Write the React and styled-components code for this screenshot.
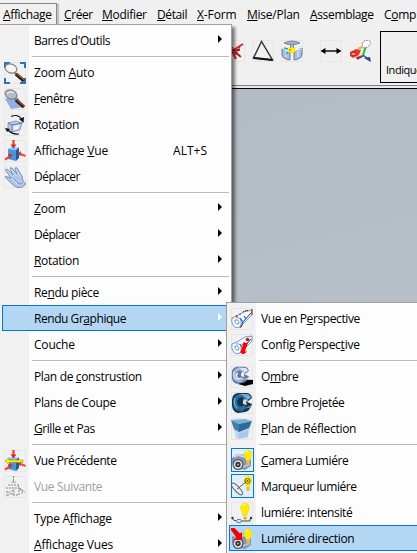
import React from "react";
import styled, { createGlobalStyle, css } from "styled-components";

const Global = createGlobalStyle`
  * { box-sizing: border-box; }
  body { margin: 0; overflow: hidden; background: #f0f0f0; }
`;

const Window = styled.div`
  position: relative;
  width: 417px;
  height: 553px;
  overflow: hidden;
  display: flex;
  flex-direction: column;
  background: #f0f0f0;
  color: #000;
  font: 12px/16px "Open Sans", "Noto Sans", sans-serif;
`;

const MenuBar = styled.nav`
  display: flex;
  flex: none;
  height: 25px;
  padding-top: 3px;
`;

const BarItem = styled.div`
  flex: none;
  width: ${(p) => p.$w}px;
  height: 22px;
  padding: 4px 0 0 5px;
  white-space: nowrap;
  letter-spacing: ${(p) => p.$ls || 0}px;
  ${(p) =>
    p.$open &&
    css`
      margin-right: 2px;
      padding: 3px 0 0 3px;
      border: 1px solid #858585;
      border-left: 0;
      border-bottom: 0;
      box-shadow: 2px 1px 1px #c4c4c4;
    `}
`;

const Key = styled.span`
  text-decoration: underline;
  text-decoration-thickness: 1px;
  text-underline-offset: 1px;
  text-decoration-skip-ink: none;
`;

const ToolBar = styled.div`
  display: flex;
  flex: none;
  height: 60px;
  padding: 6px 0 0 223px;
`;

const Tools = styled.div`
  display: flex;
  flex: none;
  width: 157px;
  padding-top: 9px;
  gap: 7px;
`;

const Tool = styled.div`
  display: flex;
  margin-left: ${(p) => (p.$group ? 10 : 0)}px;
`;

const Prompt = styled.div`
  flex: none;
  width: 60px;
  height: 52px;
  padding: 30px 0 0 5px;
  border: 1px solid #000;
  font-size: 11px;
  letter-spacing: -0.45px;
`;

const Viewport = styled.main`
  flex: 1;
  border-top: 1px solid #808080;
  background: linear-gradient(165deg, #b2bac4 0%, #bac2cc 100%);
  &::before {
    content: "";
    display: block;
    height: 2px;
    border-bottom: 1px solid #000;
    background: #e8e8e8;
  }
`;

const Menu = styled.div`
  position: absolute;
  left: ${(p) => p.$x}px;
  top: ${(p) => p.$y}px;
  width: ${(p) => p.$w}px;
  height: ${(p) => 560 - p.$y}px;
  padding: 2px 2px 0;
  border: 1px solid #a0a0a0;
  border-left-width: ${(p) => (p.$sub ? 1 : 0)}px;
  background: linear-gradient(90deg, #f1f1f1 29px, #fdfdfd 29px);
  box-shadow: 3px 3px 3px rgba(0, 0, 0, 0.5);
`;

const Row = styled.div`
  display: flex;
  align-items: center;
  height: 26px;
  padding-left: 2px;
  white-space: nowrap;
  color: ${(p) => (p.$disabled ? "#a0a0a0" : "#000")};
  ${(p) =>
    p.$active &&
    css`
      background: #b3d7f3;
      box-shadow: inset 0 0 0 1px #0078d7;
    `}
`;

const IconSlot = styled.span`
  display: flex;
  align-items: center;
  flex: none;
  width: 23px;
  height: 24px;
  margin-right: 7px;
  padding-top: 2px;
  ${(p) =>
    p.$checked &&
    css`
      padding-top: 0;
      background: #e2eef9;
      box-shadow: inset 0 0 0 1px #0078d7;
    `}
`;

const Label = styled.span`
  flex: 1;
  padding-top: 2px;
  letter-spacing: ${(p) => p.$ls || 0}px;
`;

const Shortcut = styled.span`
  margin-right: 22px;
  padding-top: 2px;
`;

const Arrow = styled.span`
  width: 0;
  height: 0;
  margin: 0 7px 2px 0;
  border: 4px solid transparent;
  border-left-color: ${(p) => (p.$light ? "#fff" : "#000")};
  border-right: 0;
`;

const Separator = styled.div`
  height: 6px;
  padding: 3px 0 0 30px;
  &::before {
    content: "";
    display: block;
    height: 1px;
    background: #bababa;
  }
`;

const Svg = ({ children, framed = true }) => (
  <svg width="22" height="22" viewBox="0 0 22 22" fill="none">
    {framed && <rect x=".5" y=".5" width="21" height="21" stroke="#e6e6e6" />}
    {children}
  </svg>
);

const Lens = ({ fill }) => (
  <>
    <path d="M10 10l3 3" stroke="#777" strokeWidth="2" />
    <path d="M12 12l8 7" stroke="#2e1c12" strokeWidth="3.600" />
    <path d="M12.500 11.500l8 6.500" stroke="#a45d34" strokeWidth="1.400" />
    <ellipse cx="7" cy="6.500" rx="6" ry="4.400" transform="rotate(20 7 6.500)" fill={fill} stroke="#858585" strokeWidth="1.200" />
    <path d="M3 5.500q3-3 7-1" stroke="#fff" />
  </>
);

const Cube = () => (
  <>
    <path d="M4 9l3-2 8 .5-3 2.500z" fill="#8cc8f6" />
    <path d="M4 9l8 1v11l-8-2z" fill="#4796da" />
    <path d="M12 10l3-2.500V18l-3 3z" fill="#1d5c9e" />
  </>
);

const RedArrows = () => (
  <>
    <path d="M9.500 0v5M1 19.500l5-3M21.500 16l-5-2" stroke="#ef4a42" strokeWidth="2.400" />
    <path d="M6.500 4.500h6l-3 4zM4 14l4.500.5-2.500 4zM17 11l-3 2.500 2.500 3z" fill="#d42a25" />
  </>
);

const Bulb = () => (
  <>
    <path d="M13 5.500a4 4.500 0 1 1 8 0c0 2-2 3-2 6h-4c0-3-2-4-2-6z" fill="#ffed00" stroke="#e5cf42" strokeWidth=".5" />
    <path d="M15 3q1-1 2-1" stroke="#fffbb0" />
    <path d="M15.500 12h3v3l-1.500 1-1.500-1z" fill="#e0ad28" />
    <path d="M15.500 13h3" stroke="#fff0a0" strokeWidth=".8" />
  </>
);

const Camera = () => (
  <>
    <path d="M1 9l5-4 9 1 5 4v7l-6 4-9-2-4-5z" fill="#8593b0" />
    <path d="M3 8l4-2 7 2" stroke="#cbd4e8" strokeWidth="2" />
    <path d="M12 18l7-3" stroke="#b9c4dc" strokeWidth="2" />
    <circle cx="7" cy="15.500" r="5.500" fill="#555b68" />
    <circle cx="7" cy="15.500" r="4.200" fill="#e4e7ed" />
    <circle cx="7" cy="15.500" r="2.700" fill="#333" />
    <circle cx="7" cy="15.500" r="1" fill="#bbb" />
  </>
);

const Pipe = ({ dots }) => (
  <>
    <path d="M1 10l5-2 8-5 7-1v6L9 19q-5 2-7-2-2-3-1-7z" fill="#f6faff" />
    <path
      d="M1 10l5-2 8-5 7-1v5L9 19q-5 2-7-2-2-3-1-7zM5 10q4-1 5 3 1 3-1 6M4 12q3-1 4 2 0 3-2 2-3-1-2-4z"
      stroke="#5b92ca"
      strokeWidth=".9"
    />
    <path d="M9 10l3 4 8-9M12 14l-2 5M13 8l2 3" stroke="#245799" strokeWidth="1.100" />
    {dots && <path d="M1 10l5-2 8-5 7-1v5" stroke="#303030" strokeWidth="1.300" strokeDasharray="1.200 3" />}
    {dots && <path d="M5 8h1.500M14 3h1.500M20 4h1.500M9 19h1" stroke="#e11" strokeWidth="1.500" />}
    {dots && <path d="M1 10h1.500M17 3h1" stroke="#d8d400" strokeWidth="1.500" />}
  </>
);

const Ring = ({ light, mid, dark, gap }) => (
  <>
    <path d="M1 8q0-6 6-7h8q5 0 6 5l-5 4 5 2q-2 7-7 8l-7 1q-5-1-6-7z" fill={dark} />
    <path d="M8 2q-6 2-6 9t6 8q5 1 8-4l-3-2q-3 3-6 0-2-5 1-7 3-2 5 1l4-1q-3-5-9-4z" fill={mid} />
    <path d="M8 2h7q4 0 5 4l-4 2q-3-5-8-6z" fill={light} />
    <path d="M13 7l4 1-2 2 1 3-4-1q-1-3 1-5z" fill={gap} />
    <path d="M4 6q-2 6 2 10M16 16l4-2" stroke={light} strokeWidth="1.200" />
  </>
);

const icons = {
  zoomAuto: (
    <Svg>
      <path d="M1 6V1h5M16 1h5v5M1 16v5h5M16 21h5v-5" stroke="#2e74bb" strokeWidth="2" />
      <Lens fill="#f5f5f3" />
    </Svg>
  ),
  window: (
    <Svg>
      <path d="M1 11l11-4 8 12-13 2z" fill="#8eafe8" />
      <Lens fill="#b5bec6" />
    </Svg>
  ),
  rotate: (
    <Svg>
      <path d="M4 9l8-2 6 2-2 7-8 2-4-3z" fill="#b6cdf3" stroke="#7489b3" strokeWidth=".8" />
      <path d="M4 9l4 2 10-2M8 11v7" stroke="#53698f" strokeWidth=".8" />
      <path d="M9.500 12l6-1-1.500 4-4.500 1z" fill="#eef5ff" />
      <path d="M7 2.500q7-3 11 3M15 20q-7 1-12-5" stroke="#151515" strokeWidth="1.200" />
      <path d="M15 5l5-2-.5 6zM1 14l5 1-3 3z" fill="#151515" />
    </Svg>
  ),
  view: (
    <Svg>
      <Cube />
      <RedArrows />
    </Svg>
  ),
  hand: (
    <Svg>
      <path
        d="M1 11q1-1 3 0l3 1-5-7q-1-2 1-2l6 6-3-6q0-2 2-1l5 6-2-5q0-2 2-1l5 8 1 5 3 3-5 4q-6 0-9-4z"
        fill="#b2c3e7"
        stroke="#7089b9"
        strokeWidth=".9"
      />
      <path d="M3 4l6 7M7 3l5 7M12 3l4 8M8 13l6 6M16 15l4 3" stroke="#d5e1f7" strokeWidth=".8" />
      <path d="M10 13l5 5 4-1" stroke="#8199ca" />
    </Svg>
  ),
  previous: (
    <Svg>
      <Cube />
      <RedArrows />
      <path d="M1 11l4-3.500V10h14v2.500H5V15z" fill="#fff200" stroke="#8b7a13" strokeWidth=".5" />
    </Svg>
  ),
  next: (
    <Svg>
      <path d="M9.500 0v7M4 9h11M2 12h13v7H8v-5M3 15v5l4-3M15 13l6 3M14 10l4 4" stroke="#858585" strokeDasharray="2 1" />
      <path d="M7 6h5M10 13v6M3 16h3M18 13v5" stroke="#a5a5a5" />
    </Svg>
  ),
  perspective: (
    <Svg>
      <Pipe dots />
    </Svg>
  ),
  perspectiveConfig: (
    <Svg>
      <Pipe />
      <path d="M12 9h5l-3 8q0 2 2-1-1 4-4 4-3 0-2-4l2-5h-1z" fill="#f00" />
      <ellipse cx="16.500" cy="5.500" rx="1.800" ry="1.800" fill="#f00" />
    </Svg>
  ),
  shadow: (
    <Svg>
      <path d="M10 16q4-3 12-2v4l-8 2-7-2z" fill="#050505" />
      <g transform="scale(.85)">
        <Ring light="#dbe5fb" mid="#a3b7de" dark="#66769d" gap="#eef2fa" />
      </g>
      <path d="M7 7q-3 2 0 6l3-1" stroke="#f5f8ff" strokeWidth="1.300" />
    </Svg>
  ),
  castShadow: (
    <Svg>
      <Ring light="#78abd1" mid="#286d9f" dark="#12334d" gap="#d5dce3" />
    </Svg>
  ),
  mirror: (
    <Svg>
      <path d="M1 5l6 1 9-1 4 1-3 14-12 1z" fill="#c4daf5" />
      <path d="M0 2l14-1 7 2-13 3z" fill="#72b2da" />
      <path d="M0 2l8 4v8l-5-3z" fill="#477da8" />
      <path d="M8 6l13-3-3 7-10 4z" fill="#2e6b99" />
      <path d="M7 15l10-3v6L8 21z" fill="#a9c6eb" />
    </Svg>
  ),
  camera: (
    <Svg framed={false}>
      <Camera />
      <Bulb />
    </Svg>
  ),
  marker: (
    <Svg framed={false}>
      <Bulb />
      <ellipse cx="6" cy="14" rx="2.500" ry="7.500" transform="rotate(-43 6 14)" fill="#e8eef4" stroke="#5d6267" />
      <path d="M6 14l9-7" stroke="#5d6267" />
      <circle cx="16.500" cy="6" r="2.500" stroke="#665a00" />
      <circle cx="16.500" cy="6" r="1" fill="#665a00" />
    </Svg>
  ),
  intensity: (
    <Svg>
      <g transform="translate(-5 0) scale(1.120)">
        <Bulb />
      </g>
      <path d="M2 17q0 2 4 2h13v-2" stroke="#444" />
      <circle cx="1.500" cy="16" r="1.200" fill="#333" />
      <circle cx="20" cy="16" r="1.200" fill="#333" />
      <ellipse cx="8" cy="19" rx="2.600" ry="1.700" fill="#dce9fc" stroke="#657ca5" />
    </Svg>
  ),
  direction: (
    <Svg framed={false}>
      <Camera />
      <Bulb />
      <path d="M-1 1L2-1.500l7 7L11 4v8H3l2.500-2.500z" fill="#f40000" />
    </Svg>
  ),
  redCross: (
    <Svg>
      <path d="M3 10h14M13 19l-4-8M9 11l11-7M9 10l9 7" stroke="#df2020" strokeWidth="2" />
      <path d="M8 6l9 10M12 15l5-8" stroke="#501010" strokeWidth=".8" />
    </Svg>
  ),
  triangle: (
    <Svg>
      <path d="M9.500 1.500L1.500 18l19 2z" stroke="#333" strokeWidth="1.400" />
      <path d="M1.500 18l19 2" stroke="#111" strokeWidth="2" />
    </Svg>
  ),
  assembly: (
    <Svg>
      <path d="M3 3q8-4 16 0l-5 1.500h-2l1 4H9l1-4H7z" fill="#9eafd3" stroke="#687490" strokeWidth=".8" />
      <path d="M1 9l8 3v8q-8-1-8-6zM21 8l-8 4v8q8-1 8-6z" fill="#a9bde1" stroke="#596783" strokeWidth=".8" />
      <path d="M2 9l7 3 3-1 9-2M5 11v6M17 11v6" stroke="#e9f0ff" />
      <path d="M11 6l1 2 3-1-1 3 2 1-3 1-2 2-2-2H6l2-2-1-2 3 0z" fill="#ffef00" />
      <path d="M3 8l4 1M7 12l-2 2" stroke="#1fac8b" strokeWidth="1.300" />
      <circle cx="9" cy="10" r=".8" fill="#e11" />
    </Svg>
  ),
  span: (
    <Svg>
      <path d="M3 11h16" stroke="#000" strokeWidth="1.400" />
      <path d="M.5 11l5-3v6zM21.500 11l-5-3v6z" fill="#000" />
    </Svg>
  ),
  axes: (
    <Svg framed={false}>
      <path d="M14 16l-6 3M14 15l6 5" stroke="#244b84" strokeWidth="1.500" />
      <path d="M14 15l3-9" stroke="#15c330" strokeWidth="2" />
      <path d="M13 16l-6 2" stroke="#e52222" strokeWidth="1.500" />
      <path d="M15 18l6-1 1 5z" fill="#244b84" />
      <path d="M1 12l6-3 5 1-2 5-6 3-3-2z" fill="#e23a2e" />
      <ellipse cx="4.500" cy="14" rx="2.800" ry="1.800" fill="#ff938a" stroke="#b41510" />
      <path d="M9 9l4-2" stroke="#ffb21d" strokeWidth="2.500" />
      <path d="M13 4l2-3 5-1 2 3-3 4-5 1z" fill="#fff" stroke="#666" strokeWidth=".8" strokeDasharray="2 1" />
    </Svg>
  ),
};

/* Underlines the character that follows "&". */
const Mnemonic = ({ text }) => {
  const i = text.indexOf("&");
  if (i < 0) return text;
  return (
    <>
      {text.slice(0, i)}
      <Key>{text[i + 1]}</Key>
      {text.slice(i + 2)}
    </>
  );
};

const bar = [
  { text: "&Affichage", w: 57, ls: -0.35, open: true },
  { text: "&Créer", w: 38, ls: -0.4 },
  { text: "&Modifier", w: 55, ls: -0.3 },
  { text: "&Détail", w: 40, ls: -0.4 },
  { text: "&X-Form", w: 50, ls: -0.1 },
  { text: "&Mise/Plan", w: 63, ls: -0.25 },
  { text: "&Assemblage", w: 74, ls: -0.35 },
  { text: "C&omp", w: 60, ls: -0.3 },
];

const mainMenu = [
  { text: "Barres d'Outils", sub: true, ls: -0.43 },
  null,
  { text: "Zoom &Auto", icon: "zoomAuto", ls: -0.2 },
  { text: "&Fenêtre", icon: "window", ls: -0.45 },
  { text: "Ro&tation", icon: "rotate", ls: -0.3 },
  { text: "Affichage &Vue", icon: "view", shortcut: "ALT+S", ls: -0.15 },
  { text: "Déplacer", icon: "hand", ls: -0.5 },
  null,
  { text: "&Zoom", sub: true, ls: -0.2 },
  { text: "Déplacer", sub: true, ls: -0.5 },
  { text: "&Rotation", sub: true, ls: -0.3 },
  null,
  { text: "Re&ndu pièce", sub: true, ls: -0.38 },
  { text: "Rendu Gr&aphique", sub: true, active: true, ls: -0.45 },
  { text: "Couche", sub: true, ls: -0.2 },
  null,
  { text: "Plan de &construstion", sub: true, ls: -0.35 },
  { text: "Plans de Coupe", sub: true, ls: -0.33 },
  { text: "&Grille et Pas", sub: true, ls: -0.43 },
  null,
  { text: "Vue Précédente", icon: "previous", ls: -0.4 },
  { text: "Vue Suivante", icon: "next", disabled: true, ls: -0.35 },
  null,
  { text: "Type A&ffichage", sub: true, ls: -0.27 },
  { text: "&Affichage Vues", sub: true, ls: -0.2 },
];

const renderMenu = [
  { text: "Vue en P&erspective", icon: "perspective", ls: -0.4 },
  { text: "Config Perspec&tive", icon: "perspectiveConfig", ls: -0.26 },
  null,
  { text: "O&mbre", icon: "shadow", ls: -0.4 },
  { text: "Ombre Projetée", icon: "castShadow", ls: -0.43 },
  { text: "&Plan de Réflection", icon: "mirror", ls: -0.28 },
  null,
  { text: "&Camera Lumiére", icon: "camera", checked: true, ls: -0.4 },
  { text: "Marqueur lumiére", icon: "marker", checked: true, ls: -0.4 },
  { text: "lumiére: intensité", icon: "intensity", ls: -0.35 },
  { text: "Lumiére direction", icon: "direction", active: true, ls: -0.33 },
];

const MenuRows = ({ items }) =>
  items.map((item, i) =>
    item ? (
      <Row key={i} $active={item.active} $disabled={item.disabled}>
        <IconSlot $checked={item.checked}>{icons[item.icon]}</IconSlot>
        <Label $ls={item.ls}>
          <Mnemonic text={item.text} />
        </Label>
        {item.shortcut && <Shortcut>{item.shortcut}</Shortcut>}
        {item.sub && <Arrow $light={item.active} />}
      </Row>
    ) : (
      <Separator key={i} />
    )
  );

export default function App() {
  return (
    <Window>
      <Global />
      <MenuBar>
        {bar.map((b) => (
          <BarItem key={b.text} $w={b.w} $ls={b.ls} $open={b.open}>
            <Mnemonic text={b.text} />
          </BarItem>
        ))}
      </MenuBar>
      <ToolBar>
        <Tools>
          <Tool>{icons.redCross}</Tool>
          <Tool>{icons.triangle}</Tool>
          <Tool>{icons.assembly}</Tool>
          <Tool $group>{icons.span}</Tool>
          <Tool>{icons.axes}</Tool>
        </Tools>
        <Prompt>Indique</Prompt>
      </ToolBar>
      <Viewport />
      <Menu $x={0} $y={24} $w={232}>
        <MenuRows items={mainMenu} />
      </Menu>
      <Menu $sub $x={226} $y={302} $w={240}>
        <MenuRows items={renderMenu} />
      </Menu>
    </Window>
  );
}
